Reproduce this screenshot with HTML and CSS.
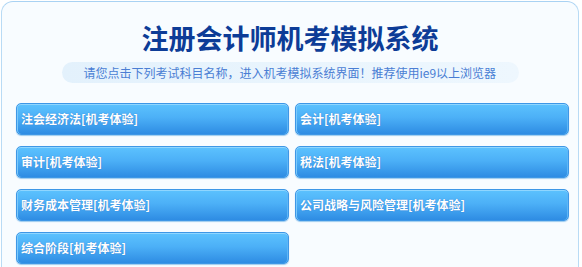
FILE: index.html
```html
<!DOCTYPE html>
<html lang="zh-CN">
<head>
<meta charset="utf-8">
<title>注册会计师机考模拟系统</title>
<link rel="stylesheet" href="styles.css">
</head>
<body>
<div class="panel">
  <h1 class="title">注册会计师机考模拟系统</h1>
  <div class="tip-wrap">
    <p class="tip">请您点击下列考试科目名称，进入机考模拟系统界面！推荐使用ie9以上浏览器</p>
  </div>
  <div class="grid">
    <a class="btn" href="#">注会经济法[机考体验]</a>
    <a class="btn" href="#">会计[机考体验]</a>
    <a class="btn" href="#">审计[机考体验]</a>
    <a class="btn" href="#">税法[机考体验]</a>
    <a class="btn" href="#">财务成本管理[机考体验]</a>
    <a class="btn" href="#">公司战略与风险管理[机考体验]</a>
    <a class="btn" href="#">综合阶段[机考体验]</a>
  </div>
</div>
</body>
</html>
```

FILE: styles.css
```css
html, body {
  margin: 0;
  padding: 0;
  background: #ffffff;
  overflow: hidden;
}
body {
  font-family: "Noto Sans CJK SC", "Noto Sans", sans-serif;
}
.panel {
  margin: 1px 3px 0 1px;
  height: 266px;
  border: 1px solid #b9dbf5;
  border-top-color: #a9d2f3;
  border-bottom: none;
  border-radius: 12px 12px 0 0;
  background: #f8fcff;
  padding-top: 18px;
  box-sizing: border-box;
}
.title {
  margin: 0;
  text-align: center;
  font-size: 27px;
  line-height: 36px;
  font-weight: 700;
  color: #0d3c97;
  letter-spacing: 0;
}
.tip-wrap {
  display: flex;
  justify-content: center;
  margin-top: 6px;
}
.tip {
  margin: 0;
  width: 457px;
  height: 21px;
  box-sizing: border-box;
  padding-left: 22px;
  border-radius: 11px;
  background: linear-gradient(90deg, #e3f1fc 0%, #eaf5fd 60%, #eef7fe 100%);
  font-size: 12px;
  line-height: 21px;
  color: #4a7ed4;
  white-space: nowrap;
}
.grid {
  display: grid;
  grid-template-columns: 273px 274px;
  column-gap: 6px;
  row-gap: 11px;
  padding-left: 14px;
  margin-top: 20px;
}
.btn {
  display: block;
  height: 32px;
  box-sizing: border-box;
  padding-left: 4px;
  border: 1px solid #3e97e6;
  border-radius: 5px;
  background: linear-gradient(180deg, #5cc2fe 0%, #4cb0f7 45%, #2e8ce3 100%);
  box-shadow: inset 0 1px 0 #8fd6ff, inset 1px 0 0 #7cc9fb, inset -1px 0 0 #5db6f6, 0 1px 1px #9ccbef;
  color: #ffffff;
  font-size: 12px;
  font-weight: 700;
  line-height: 30px;
  text-decoration: none;
  white-space: nowrap;
  text-shadow: 0 0 1px #2a6fc4;
}
```
